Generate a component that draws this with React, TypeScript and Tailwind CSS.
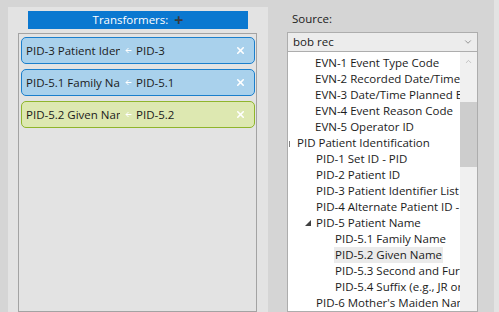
import { ChevronDown, ChevronUp, X } from "lucide-react"

type Mapping = { target: string; source: string; green?: boolean }

const mappings: Mapping[] = [
  { target: "PID-3 Patient Identifier List", source: "PID-3" },
  { target: "PID-5.1 Family Name", source: "PID-5.1" },
  { target: "PID-5.2 Given Name", source: "PID-5.2", green: true },
]

type Node = { label: string; indent: number; expander?: "open" | "stub"; selected?: boolean }

const nodes: Node[] = [
  { label: "EVN-1 Event Type Code", indent: 27 },
  { label: "EVN-2 Recorded Date/Time", indent: 27 },
  { label: "EVN-3 Date/Time Planned Event", indent: 27 },
  { label: "EVN-4 Event Reason Code", indent: 27 },
  { label: "EVN-5 Operator ID", indent: 27 },
  { label: "PID Patient Identification", indent: 9, expander: "stub" },
  { label: "PID-1 Set ID - PID", indent: 28 },
  { label: "PID-2 Patient ID", indent: 28 },
  { label: "PID-3 Patient Identifier List", indent: 28 },
  { label: "PID-4 Alternate Patient ID - PID", indent: 28 },
  { label: "PID-5 Patient Name", indent: 28, expander: "open" },
  { label: "PID-5.1 Family Name", indent: 47 },
  { label: "PID-5.2 Given Name", indent: 47, selected: true },
  { label: "PID-5.3 Second and Further Given Names", indent: 47 },
  { label: "PID-5.4 Suffix (e.g., JR or III)", indent: 47 },
  { label: "PID-6 Mother's Maiden Name", indent: 28 },
]

function MappingCard({ m }: { m: Mapping }) {
  return (
    <div
      className={
        m.green
          ? "flex items-center h-[27px] rounded-[5px] border border-[#8fb52c] bg-[#dde8b1] pl-[4px] pr-[8px]"
          : "flex items-center h-[27px] rounded-[5px] border border-[#1b7fcc] bg-[#a9d1ec] pl-[4px] pr-[8px]"
      }
    >
      <span className="w-[94px] overflow-hidden whitespace-nowrap">{m.target}</span>
      <svg className="ml-[5px]" width="7" height="7" viewBox="0 0 7 7">
        <path d="M6.5 3.5 H1 M3.5 1 L1 3.5 L3.5 6" stroke="white" strokeWidth="1" fill="none" />
      </svg>
      <span className="ml-[4px]">{m.source}</span>
      <X className="ml-auto w-[11px] h-[11px] text-white" strokeWidth={3.5} />
    </div>
  )
}

export default function App() {
  return (
    <div
      className="w-[499px] h-[312px] flex overflow-hidden bg-[#d5d5d5] text-[#1b1b1b] text-[11.5px]"
      style={{ fontFamily: '"Segoe UI", "Open Sans", sans-serif' }}
    >
      <div className="ml-[8px] mt-[7px] w-[260px] bg-[#e3e3e3] flex flex-col">
        <div className="mx-[20px] mt-[4px] h-[18px] bg-[#0a78d0] flex items-center justify-center text-white text-[11.5px]">
          <span>Transformers:</span>
          <span className="ml-[6px] text-[#3a3a3a] text-[16px] font-bold leading-none">+</span>
        </div>
        <div className="ml-[10px] mr-[11px] mt-[4px] flex-1 border border-[#a3a3a3] flex flex-col gap-[5px] pt-[3px] pl-[2px] pr-[1px]">
          {mappings.map(m => (
            <MappingCard key={m.source} m={m} />
          ))}
        </div>
      </div>

      <div className="ml-[19px] w-[191px] flex flex-col">
        <div className="mt-[8px] h-[21px] pl-[5px] flex items-center">Source:</div>
        <div className="mt-[3px] h-[20px] border border-[#adadad] bg-[#ececec] flex items-center pl-[5px] pr-[4px]">
          <span>bob rec</span>
          <ChevronDown className="ml-auto w-[10px] h-[10px] text-[#606060]" strokeWidth={1.5} />
        </div>
        <div className="flex-1 border border-[#adadad] border-t-0 bg-white flex overflow-hidden">
          <div className="flex-1 overflow-hidden pt-[3px]">
            {nodes.map(n => (
              <div key={n.label} className="relative h-[16px] flex items-center whitespace-nowrap" style={{ paddingLeft: n.indent }}>
                {n.expander === "stub" && (
                  <span className="absolute left-[1px] top-[6px] w-[1px] h-[6px] bg-[#808080]" />
                )}
                {n.expander === "open" && (
                  <svg className="absolute left-[17px] top-[5px]" width="6" height="6" viewBox="0 0 6 6">
                    <path d="M6 0 L6 6 L0 6 Z" fill="#404040" />
                  </svg>
                )}
                <span className={n.selected ? "bg-[#ebebeb] px-[1px] -ml-[1px] leading-[16px]" : "leading-[16px]"}>
                  {n.label}
                </span>
              </div>
            ))}
          </div>
          <div className="w-[17px] bg-[#f0f0f0] flex flex-col items-center">
            <ChevronUp className="mt-[5px] w-[9px] h-[9px] text-[#a0a0a0]" strokeWidth={1.5} />
            <div className="mt-[36px] w-[17px] h-[65px] bg-[#cdcdcd]" />
          </div>
        </div>
      </div>

      <div className="ml-[16px] flex-1 bg-[#e3e3e3]" />
    </div>
  )
}
